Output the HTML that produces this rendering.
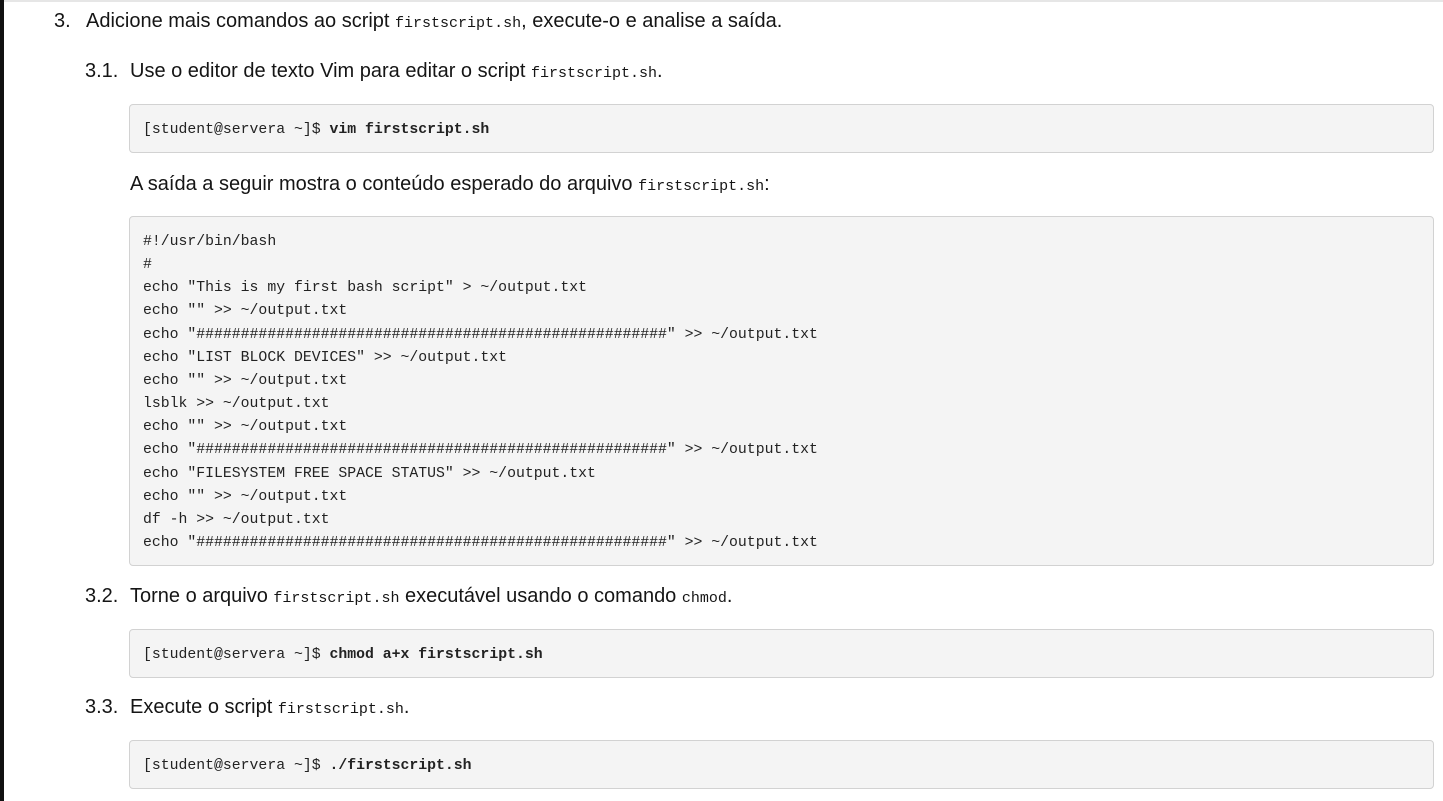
<!DOCTYPE html>
<html><head><meta charset="utf-8"><style>
*{margin:0;padding:0;box-sizing:border-box}
body{width:1443px;height:801px;overflow:hidden;background:#fff;position:relative;font-family:"Liberation Sans",sans-serif;color:#151515}
.bar{position:absolute;left:0;top:0;width:4px;height:801px;background:#111}
.top{position:absolute;left:4px;top:0;right:0;height:2px;background:#e6e6e6}
.t{position:absolute;font-size:20px;line-height:24px;white-space:nowrap;letter-spacing:0}
.n{position:absolute;font-size:20px;line-height:24px}
code,.m{font-family:"Liberation Mono",monospace;font-size:15px;letter-spacing:0;color:#151515}
.box{position:absolute;left:129px;width:1305px;background:#f4f4f4;border:1px solid #d2d2d2;border-radius:4px;padding:0 13px;font-family:"Liberation Mono",monospace;font-size:14.8px;white-space:pre;color:#222}
b{font-weight:bold}
</style></head><body>
<div class="bar"></div><div class="top"></div>
<div class="n" style="left:54px;top:9px">3.</div>
<div class="t" style="left:86px;top:9px">Adicione mais comandos ao script <code>firstscript.sh</code>, execute-o e analise a saída.</div>
<div class="n" style="left:85px;top:59px">3.1.</div>
<div class="t" style="left:130px;top:59px">Use o editor de texto Vim para editar o script <code>firstscript.sh</code>.</div>
<div class="box" style="top:104px;height:49px;line-height:51px">[student@servera ~]$ <b>vim firstscript.sh</b></div>
<div class="t" style="left:130px;top:172px">A saída a seguir mostra o conteúdo esperado do arquivo <code>firstscript.sh</code>:</div>
<div class="box" style="top:216px;height:350px;line-height:23.15px;padding-top:14px">#!/usr/bin/bash
#
echo "This is my first bash script" &gt; ~/output.txt
echo "" &gt;&gt; ~/output.txt
echo "#####################################################" &gt;&gt; ~/output.txt
echo "LIST BLOCK DEVICES" &gt;&gt; ~/output.txt
echo "" &gt;&gt; ~/output.txt
lsblk &gt;&gt; ~/output.txt
echo "" &gt;&gt; ~/output.txt
echo "#####################################################" &gt;&gt; ~/output.txt
echo "FILESYSTEM FREE SPACE STATUS" &gt;&gt; ~/output.txt
echo "" &gt;&gt; ~/output.txt
df -h &gt;&gt; ~/output.txt
echo "#####################################################" &gt;&gt; ~/output.txt</div>
<div class="n" style="left:85px;top:584px">3.2.</div>
<div class="t" style="left:130px;top:584px">Torne o arquivo <code>firstscript.sh</code> executável usando o comando <code>chmod</code>.</div>
<div class="box" style="top:629px;height:49px;line-height:51px">[student@servera ~]$ <b>chmod a+x firstscript.sh</b></div>
<div class="n" style="left:85px;top:695px">3.3.</div>
<div class="t" style="left:130px;top:695px">Execute o script <code>firstscript.sh</code>.</div>
<div class="box" style="top:740px;height:49px;line-height:51px">[student@servera ~]$ <b>./firstscript.sh</b></div>
</body></html>
